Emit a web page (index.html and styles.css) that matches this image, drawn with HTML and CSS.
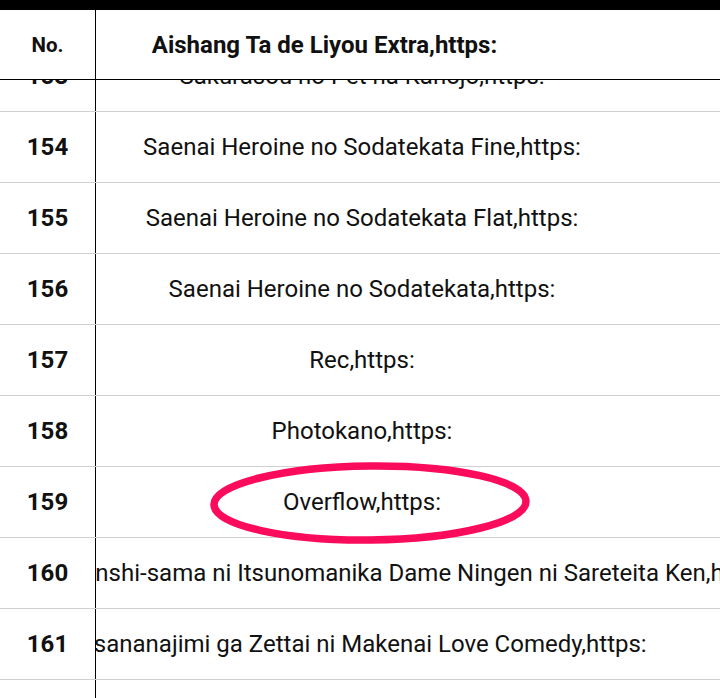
FILE: index.html
```html
<!DOCTYPE html>
<html>

<head>
    <title>Anime List</title>
    <link rel="stylesheet" href="styles.css">
</head>

<body>
    <div class="topbar"></div>

    <div class="table">
        <div class="row head">
            <div class="num">No.</div>
            <div class="title">Aishang Ta de Liyou Extra,https:</div>
        </div>

        <div class="body">
            <div class="rows">
                <div class="row">
                    <div class="num">153</div>
                    <div class="title">Sakurasou no Pet na Kanojo,https:</div>
                </div>
                <div class="row">
                    <div class="num">154</div>
                    <div class="title">Saenai Heroine no Sodatekata Fine,https:</div>
                </div>
                <div class="row">
                    <div class="num">155</div>
                    <div class="title">Saenai Heroine no Sodatekata Flat,https:</div>
                </div>
                <div class="row">
                    <div class="num">156</div>
                    <div class="title">Saenai Heroine no Sodatekata,https:</div>
                </div>
                <div class="row">
                    <div class="num">157</div>
                    <div class="title">Rec,https:</div>
                </div>
                <div class="row">
                    <div class="num">158</div>
                    <div class="title">Photokano,https:</div>
                </div>
                <div class="row">
                    <div class="num">159</div>
                    <div class="title">Overflow,https:</div>
                </div>
                <div class="row">
                    <div class="num">160</div>
                    <div class="title">Otonari no Tenshi-sama ni Itsunomanika Dame Ningen ni Sareteita Ken,https:</div>
                </div>
                <div class="row">
                    <div class="num">161</div>
                    <div class="title">Osananajimi ga Zettai ni Makenai Love Comedy,https:</div>
                </div>
                <div class="row">
                    <div class="num">162</div>
                    <div class="title">Ore no Imouto ga Konnani Kawaii Wake ga Nai,https:</div>
                </div>
            </div>
        </div>

        <!-- red mark drawn over row 159 -->
        <svg class="mark" width="330" height="90" viewBox="0 0 330 90">
            <ellipse cx="165" cy="44" rx="156" ry="37" fill="none" stroke="#fb0b5c" stroke-width="7.5"
                transform="rotate(-0.6 165 44)" />
        </svg>
    </div>
</body>

</html>
```

FILE: styles.css
```css
html,
body {
    margin: 0;
    padding: 0;
    background: white;
}

body {
    width: 720px;
    height: 698px;
    overflow: hidden;
    font-family: Roboto, "Liberation Sans", sans-serif;
    color: #111;
}

.topbar {
    height: 10px;
    background: black;
}

.table {
    position: relative;
}

.row {
    display: flex;
    height: 70px;
    border-bottom: 1px solid #d0d0d0;
}

.num {
    width: 95px;
    flex-shrink: 0;
    border-right: 1px solid black;
    background: white;
    position: relative;
    z-index: 1;
    display: flex;
    align-items: center;
    justify-content: center;
    font-weight: bold;
    font-size: 24px;
}

/* 文字置中, 太長時往兩邊溢出 */
.title {
    width: 532px;
    flex-shrink: 0;
    display: flex;
    align-items: center;
    justify-content: center;
    white-space: nowrap;
    font-size: 24px;
}

.head {
    height: 69px;
    border-bottom: 1px solid black;
    position: relative;
    z-index: 2;
    background: white;
}

.head .num {
    font-size: 20.5px;
}

.head .title {
    width: 457px;
    font-size: 24px;
    font-weight: bold;
}

.body {
    height: 618px;
    overflow: hidden;
}

.rows {
    margin-top: -39px;
}

.mark {
    position: absolute;
    left: 205px;
    top: 449px;
    z-index: 3;
}
```
